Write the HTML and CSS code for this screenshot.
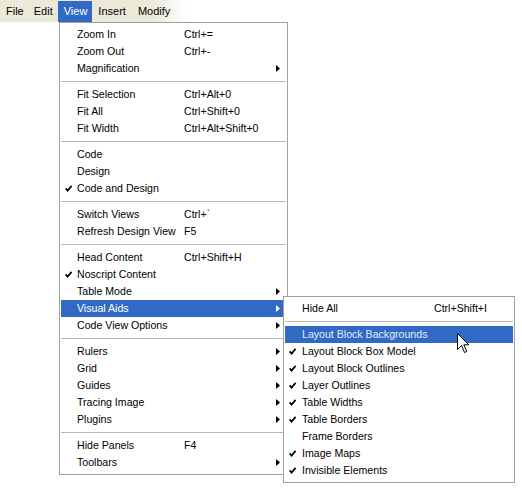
FILE: index.html
```html
<!DOCTYPE html>
<html>
<head>
<meta charset="utf-8">
<link rel="stylesheet" href="styles.css">
</head>
<body>
<div class="screen">
  <div class="menubar">
    <span class="mb-item">File</span>
    <span class="mb-item">Edit</span>
    <span class="mb-item active">View</span>
    <span class="mb-item">Insert</span>
    <span class="mb-item">Modify</span>
  </div>

  <div class="dropdown">
    <div class="item"><span class="check"></span><span class="label">Zoom In</span><span class="key">Ctrl+=</span><span class="arrow"></span></div>
    <div class="item"><span class="check"></span><span class="label">Zoom Out</span><span class="key">Ctrl+-</span><span class="arrow"></span></div>
    <div class="item"><span class="check"></span><span class="label">Magnification</span><span class="key"></span><span class="arrow"><svg width="4" height="7" viewBox="0 0 4 7"><polygon points="0,0 4,3.5 0,7" fill="#000"/></svg></span></div>
    <div class="sep"></div>
    <div class="item"><span class="check"></span><span class="label">Fit Selection</span><span class="key">Ctrl+Alt+0</span><span class="arrow"></span></div>
    <div class="item"><span class="check"></span><span class="label">Fit All</span><span class="key">Ctrl+Shift+0</span><span class="arrow"></span></div>
    <div class="item"><span class="check"></span><span class="label">Fit Width</span><span class="key">Ctrl+Alt+Shift+0</span><span class="arrow"></span></div>
    <div class="sep"></div>
    <div class="item"><span class="check"></span><span class="label">Code</span><span class="key"></span><span class="arrow"></span></div>
    <div class="item"><span class="check"></span><span class="label">Design</span><span class="key"></span><span class="arrow"></span></div>
    <div class="item"><span class="check"><svg width="7" height="7" viewBox="0 0 7 7"><path d="M0.6 3.4 L2.6 5.6 L6.6 0.8" fill="none" stroke="#000" stroke-width="1.7"/></svg></span><span class="label">Code and Design</span><span class="key"></span><span class="arrow"></span></div>
    <div class="sep"></div>
    <div class="item"><span class="check"></span><span class="label">Switch Views</span><span class="key">Ctrl+`</span><span class="arrow"></span></div>
    <div class="item"><span class="check"></span><span class="label">Refresh Design View</span><span class="key">F5</span><span class="arrow"></span></div>
    <div class="sep"></div>
    <div class="item"><span class="check"></span><span class="label">Head Content</span><span class="key">Ctrl+Shift+H</span><span class="arrow"></span></div>
    <div class="item"><span class="check"><svg width="7" height="7" viewBox="0 0 7 7"><path d="M0.6 3.4 L2.6 5.6 L6.6 0.8" fill="none" stroke="#000" stroke-width="1.7"/></svg></span><span class="label">Noscript Content</span><span class="key"></span><span class="arrow"></span></div>
    <div class="item"><span class="check"></span><span class="label">Table Mode</span><span class="key"></span><span class="arrow"><svg width="4" height="7" viewBox="0 0 4 7"><polygon points="0,0 4,3.5 0,7" fill="#000"/></svg></span></div>
    <div class="item hl has-sub"><span class="check"></span><span class="label">Visual Aids</span><span class="key"></span><span class="arrow"><svg width="4" height="7" viewBox="0 0 4 7"><polygon points="0,0 4,3.5 0,7" fill="#fff"/></svg></span>
      <div class="submenu">
        <div class="sitem"><span class="check"></span><span class="label">Hide All</span><span class="key">Ctrl+Shift+I</span></div>
        <div class="sep"></div>
        <div class="sitem hl-sub"><span class="check"></span><span class="label">Layout Block Backgrounds</span><span class="key"></span></div>
        <div class="sitem"><span class="check"><svg width="7" height="7" viewBox="0 0 7 7"><path d="M0.6 3.4 L2.6 5.6 L6.6 0.8" fill="none" stroke="#000" stroke-width="1.7"/></svg></span><span class="label">Layout Block Box Model</span><span class="key"></span></div>
        <div class="sitem"><span class="check"><svg width="7" height="7" viewBox="0 0 7 7"><path d="M0.6 3.4 L2.6 5.6 L6.6 0.8" fill="none" stroke="#000" stroke-width="1.7"/></svg></span><span class="label">Layout Block Outlines</span><span class="key"></span></div>
        <div class="sitem"><span class="check"><svg width="7" height="7" viewBox="0 0 7 7"><path d="M0.6 3.4 L2.6 5.6 L6.6 0.8" fill="none" stroke="#000" stroke-width="1.7"/></svg></span><span class="label">Layer Outlines</span><span class="key"></span></div>
        <div class="sitem"><span class="check"><svg width="7" height="7" viewBox="0 0 7 7"><path d="M0.6 3.4 L2.6 5.6 L6.6 0.8" fill="none" stroke="#000" stroke-width="1.7"/></svg></span><span class="label">Table Widths</span><span class="key"></span></div>
        <div class="sitem"><span class="check"><svg width="7" height="7" viewBox="0 0 7 7"><path d="M0.6 3.4 L2.6 5.6 L6.6 0.8" fill="none" stroke="#000" stroke-width="1.7"/></svg></span><span class="label">Table Borders</span><span class="key"></span></div>
        <div class="sitem"><span class="check"></span><span class="label">Frame Borders</span><span class="key"></span></div>
        <div class="sitem"><span class="check"><svg width="7" height="7" viewBox="0 0 7 7"><path d="M0.6 3.4 L2.6 5.6 L6.6 0.8" fill="none" stroke="#000" stroke-width="1.7"/></svg></span><span class="label">Image Maps</span><span class="key"></span></div>
        <div class="sitem"><span class="check"><svg width="7" height="7" viewBox="0 0 7 7"><path d="M0.6 3.4 L2.6 5.6 L6.6 0.8" fill="none" stroke="#000" stroke-width="1.7"/></svg></span><span class="label">Invisible Elements</span><span class="key"></span></div>
      </div>
    </div>
    <div class="item"><span class="check"></span><span class="label">Code View Options</span><span class="key"></span><span class="arrow"><svg width="4" height="7" viewBox="0 0 4 7"><polygon points="0,0 4,3.5 0,7" fill="#000"/></svg></span></div>
    <div class="sep"></div>
    <div class="item"><span class="check"></span><span class="label">Rulers</span><span class="key"></span><span class="arrow"><svg width="4" height="7" viewBox="0 0 4 7"><polygon points="0,0 4,3.5 0,7" fill="#000"/></svg></span></div>
    <div class="item"><span class="check"></span><span class="label">Grid</span><span class="key"></span><span class="arrow"><svg width="4" height="7" viewBox="0 0 4 7"><polygon points="0,0 4,3.5 0,7" fill="#000"/></svg></span></div>
    <div class="item"><span class="check"></span><span class="label">Guides</span><span class="key"></span><span class="arrow"><svg width="4" height="7" viewBox="0 0 4 7"><polygon points="0,0 4,3.5 0,7" fill="#000"/></svg></span></div>
    <div class="item"><span class="check"></span><span class="label">Tracing Image</span><span class="key"></span><span class="arrow"><svg width="4" height="7" viewBox="0 0 4 7"><polygon points="0,0 4,3.5 0,7" fill="#000"/></svg></span></div>
    <div class="item"><span class="check"></span><span class="label">Plugins</span><span class="key"></span><span class="arrow"><svg width="4" height="7" viewBox="0 0 4 7"><polygon points="0,0 4,3.5 0,7" fill="#000"/></svg></span></div>
    <div class="sep"></div>
    <div class="item"><span class="check"></span><span class="label">Hide Panels</span><span class="key">F4</span><span class="arrow"></span></div>
    <div class="item"><span class="check"></span><span class="label">Toolbars</span><span class="key"></span><span class="arrow"><svg width="4" height="7" viewBox="0 0 4 7"><polygon points="0,0 4,3.5 0,7" fill="#000"/></svg></span></div>
  </div>

  <svg class="cursor" width="13" height="21" viewBox="0 0 13 21"><path d="M0.5 0.5 L0.5 16.5 L4.5 12.5 L7.5 19.5 L9.8 18.5 L6.8 11.8 L11.8 11.8 Z" fill="#fff" stroke="#000" stroke-width="1" stroke-linejoin="miter"/></svg>
</div>
</body>
</html>
```

FILE: styles.css
```css
html, body {
  margin: 0;
  padding: 0;
  background: #fff;
}

.screen {
  position: relative;
  width: 522px;
  height: 488px;
  font-family: "Liberation Sans", Arial, sans-serif;
  font-size: 11px;
  color: #000;
}

.menubar {
  display: flex;
  height: 22px;
  padding-left: 1px;
  background: linear-gradient(to right, #ece9d8 0, #ece9d8 150px, #ffffff 188px);
}

.mb-item {
  padding: 0 5px;
  line-height: 22px;
}

.mb-item.active {
  background: #316ac5;
  color: #fff;
  margin-top: 1px;
  line-height: 21px;
  padding: 0 5px 0 6px;
}

.mb-item.active + .mb-item {
  padding-left: 6px;
  padding-right: 7px;
}

.dropdown {
  margin-left: 59px;
  width: 229px;
  box-sizing: border-box;
  border: 1px solid #a0a0a0;
  padding: 3px 1px;
  background: #fff;
  font-size: 10.6px;
}

.item {
  display: grid;
  grid-template-columns: 16px 107px 1fr 11px;
  height: 17px;
  align-items: center;
  line-height: 17px;
  white-space: nowrap;
}

.item.hl {
  background: #316ac5;
  color: #fff;
}

.has-sub {
  position: relative;
}

.check {
  display: flex;
  align-items: center;
  padding-left: 4px;
  height: 17px;
}

.arrow {
  display: flex;
  align-items: center;
  padding-left: 1px;
  height: 17px;
}

.sep {
  height: 1px;
  margin: 4px 0;
  background: #b9b9b9;
}

.submenu {
  position: absolute;
  top: -4px;
  left: 222px;
  width: 232px;
  box-sizing: border-box;
  border: 1px solid #a0a0a0;
  padding: 3px 1px;
  background: #fff;
  color: #000;
}

.sitem {
  display: grid;
  grid-template-columns: 17px 132px 1fr;
  height: 17px;
  align-items: center;
  line-height: 17px;
  white-space: nowrap;
}

.sitem.hl-sub {
  background: #316ac5;
  color: #e4eaf6;
}

.cursor {
  position: absolute;
  left: 457px;
  top: 333px;
}
```
